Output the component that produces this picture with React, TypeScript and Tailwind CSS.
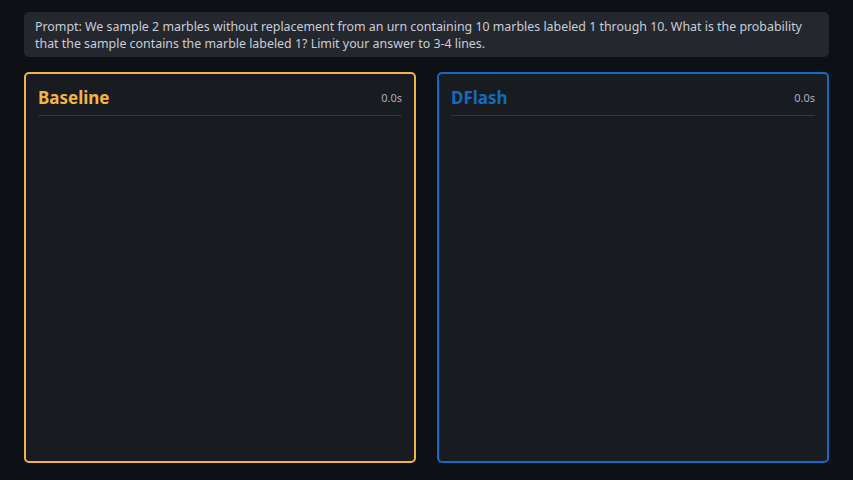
import React from "react";

interface PanelProps {
  title: string;
  time: string;
  accent: "orange" | "blue";
}

const Panel: React.FC<PanelProps> = ({ title, time, accent }) => {
  const border = accent === "orange" ? "border-[#f2b544]" : "border-[#136bc0]";
  const text = accent === "orange" ? "text-[#f2b544]" : "text-[#136bc0]";

  return (
    <div className={`flex-1 flex flex-col rounded-[5px] border-2 ${border} bg-[#181b20] px-3`}>
      <div className="flex items-center justify-between border-b border-[#33363c] pt-[12px] pb-[5px]">
        <span className={`text-[17px] font-bold leading-[24px] ${text}`}>{title}</span>
        <span className="text-[11px] text-[#a9b0b8]">{time}</span>
      </div>
      <div className="flex-1" />
    </div>
  );
};

export default function App() {
  return (
    <div
      className="w-[853px] h-[480px] bg-[#0d1014] flex flex-col px-6 pt-3 pb-[17px]"
      style={{ fontFamily: '"Noto Sans", "Open Sans", sans-serif' }}
    >
      <div className="rounded-[5px] bg-[#24272e] px-[11px] pt-[6px] pb-[5px] text-[12.4px] leading-[17px] text-[#c9ced6]">
        Prompt: We sample 2 marbles without replacement from an urn containing 10 marbles labeled 1 through 10. What is the probability
        that the sample contains the marble labeled 1? Limit your answer to 3-4 lines.
      </div>
      <div className="flex-1 flex gap-[21px] mt-[15px]">
        <Panel title="Baseline" time="0.0s" accent="orange" />
        <Panel title="DFlash" time="0.0s" accent="blue" />
      </div>
    </div>
  );
}
